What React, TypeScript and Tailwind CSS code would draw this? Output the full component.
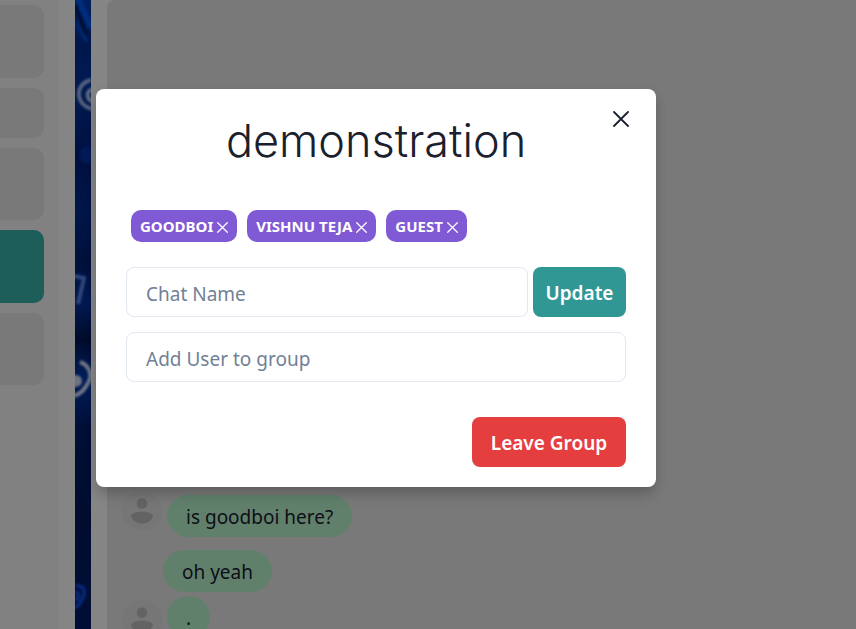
import React from "react";

const chats = [
  { id: 1, name: "Study group", size: "h-[73px]", active: false },
  { id: 2, name: "Guest", size: "h-[50px]", active: false },
  { id: 3, name: "Vishnu", size: "h-[72px]", active: false },
  { id: 4, name: "demonstration", size: "h-[73px]", active: true },
  { id: 5, name: "Friends", size: "h-[72px]", active: false },
];

const members = ["GOODBOI", "VISHNU TEJA", "GUEST"];

function Cross({ className, width }: { className: string; width: number }) {
  return (
    <svg viewBox="0 0 16 16" className={className} fill="none" stroke="currentColor" strokeWidth={width} strokeLinecap="round" aria-hidden="true">
      <path d="M1 1l14 14M15 1L1 15" />
    </svg>
  );
}

function Avatar() {
  return (
    <svg viewBox="0 0 40 40" className="size-10 shrink-0" aria-hidden="true">
      <circle cx="20" cy="20" r="20" fill="#e2e2e2" />
      <circle cx="20" cy="12.5" r="5.3" fill="#bebebe" />
      <path d="M9 25.500c0-3.500 6-4.800 11-4.800s11 1.300 11 4.800c-2 4.500-6 7-11 7s-9-2.500-11-7z" fill="#bebebe" />
    </svg>
  );
}

function Wallpaper() {
  return (
    <svg viewBox="0 0 16 629" preserveAspectRatio="xMidYMin slice" className="h-full w-4 shrink-0" aria-hidden="true">
      <defs>
        <linearGradient id="night" x1="0" y1="0" x2="0" y2="1">
          <stop offset="0" stopColor="#0040b8" />
          <stop offset="0.07" stopColor="#002c91" />
          <stop offset="0.14" stopColor="#0034a0" />
          <stop offset="0.25" stopColor="#00207a" />
          <stop offset="0.34" stopColor="#002b8c" />
          <stop offset="0.42" stopColor="#001f70" />
          <stop offset="0.48" stopColor="#0030a0" />
          <stop offset="0.54" stopColor="#001650" />
          <stop offset="0.6" stopColor="#0038b0" />
          <stop offset="0.68" stopColor="#001d68" />
          <stop offset="0.82" stopColor="#001a5a" />
          <stop offset="1" stopColor="#001c68" />
        </linearGradient>
        <filter id="glow" x="-50%" y="-50%" width="200%" height="200%">
          <feGaussianBlur stdDeviation="0.8" />
        </filter>
      </defs>
      <rect width="16" height="629" fill="url(#night)" />
      <g fill="none" filter="url(#glow)">
        <path d="M3-2l13 30" stroke="#0057ef" strokeWidth="6" />
        <path d="M0 5l12 30" stroke="#001c6a" strokeWidth="4" />
        <path d="M0 22l12 20" stroke="#0048cc" strokeWidth="4" />
        <ellipse cx="12" cy="155" rx="7" ry="9" fill="#003dba" opacity=".7" />
        <path d="M16 80C7 82 3 89 4 96s6 11 13 13" stroke="#a4b9f0" strokeWidth="4" />
        <path d="M17 89c-4 2-5 5-4 8s3 4 5 5" stroke="#b4c6f0" strokeWidth="4" />
        <path d="M-1 276l10 2-6 26" stroke="#5a88ec" strokeWidth="4" />
        <path d="M5 362c9 3 13 13 8 21-3 6-7 11-14 13" stroke="#d4e0fa" strokeWidth="4" />
        <circle cx="1" cy="381" r="6" fill="#d0dcf4" />
        <path d="M1 586c7-1 10 5 7 11-2 5-4 8-8 11M0 592c5 0 4 6 0 8" stroke="#0a4ae0" strokeWidth="4" />
      </g>
    </svg>
  );
}

function Sidebar() {
  return (
    <aside className="w-[75px] shrink-0 bg-white pr-4">
      <ul className="flex h-full flex-col gap-[10px] bg-[#f8f8f8] pt-[5px] pr-[15px]">
        {chats.map((chat) => (
          <li key={chat.id}>
            <button
              aria-label={chat.name}
              className={`block w-full rounded-r-[10px] ${chat.size} ${chat.active ? "bg-[#38b2ac]" : "bg-[#e8e8e8]"}`}
            />
          </li>
        ))}
      </ul>
    </aside>
  );
}

function Bubble({ children }: { children: React.ReactNode }) {
  return <p className="h-[42px] rounded-full bg-[#b9f5d0] px-[19px] py-2 text-[19px] leading-7 text-[#1a202c]">{children}</p>;
}

function Messages() {
  return (
    <main className="min-w-0 flex-1 bg-white pl-4">
      <div className="flex h-full flex-col rounded-tl-lg bg-[#e8e8e8] pt-[491px] pl-[15px]">
        <div className="flex items-start gap-[5px]">
          <Avatar />
          <div className="pt-1">
            <Bubble>is goodboi here?</Bubble>
          </div>
        </div>
        <div className="flex pt-[13px] pl-[41px]">
          <Bubble>oh yeah</Bubble>
        </div>
        <div className="flex items-start gap-[5px] pt-1">
          <div className="pt-1">
            <Avatar />
          </div>
          <Bubble>.</Bubble>
        </div>
      </div>
    </main>
  );
}

function GroupDialog() {
  return (
    <section
      role="dialog"
      aria-modal="true"
      aria-labelledby="group-title"
      className="relative w-full max-w-[560px] rounded-lg bg-white px-[30px] pb-5 text-[#1a202c] shadow-[0_10px_15px_-3px_rgba(0,0,0,0.15),0_4px_12px_0_rgba(0,0,0,0.1)]"
    >
      <button aria-label="Close" className="absolute top-[10px] right-[15px] flex size-10 items-center justify-center">
        <Cross className="size-4" width={1.8} />
      </button>
      <h1 id="group-title" className="pt-5 text-center font-['Inter'] text-[45px] leading-[64px] font-light">
        demonstration
      </h1>
      <ul className="flex flex-wrap gap-[10px] pt-[37px] pl-[5px]">
        {members.map((name) => (
          <li key={name} className="flex h-8 items-center gap-1 rounded-[10px] bg-[#805ad5] px-[9px] text-[15px] font-bold text-white">
            {name}
            <button aria-label={`Remove ${name}`} className="pt-[2px]">
              <Cross className="size-[11px]" width={1.8} />
            </button>
          </li>
        ))}
      </ul>
      <form className="pt-[25px]" onSubmit={(e) => e.preventDefault()}>
        <div className="flex gap-[5px]">
          <input
            aria-label="Chat Name"
            placeholder="Chat Name"
            className="h-[50px] min-w-0 flex-1 rounded-lg border border-[#e2e8f0] px-[19px] pt-1 text-[19px] placeholder:text-[#718096]"
          />
          <button className="h-[50px] w-[93px] rounded-lg bg-[#319795] pt-[2px] text-[19px] font-semibold text-white">Update</button>
        </div>
        <input
          aria-label="Add User to group"
          placeholder="Add User to group"
          className="mt-[15px] block h-[50px] w-full rounded-lg border border-[#e2e8f0] px-[19px] pt-1 text-[19px] placeholder:text-[#718096]"
        />
      </form>
      <footer className="flex justify-end pt-[35px]">
        <button className="h-[50px] w-[154px] rounded-lg bg-[#e53e3e] pt-[2px] text-[19px] font-semibold text-white">Leave Group</button>
      </footer>
    </section>
  );
}

export default function App() {
  return (
    <div className="relative h-screen overflow-hidden font-['Noto_Sans','Open_Sans',sans-serif]">
      <div className="flex h-full">
        <Sidebar />
        <Wallpaper />
        <Messages />
      </div>
      <div className="absolute inset-0 flex items-start bg-black/48 pt-[89px] pr-4 pl-24">
        <GroupDialog />
      </div>
    </div>
  );
}
